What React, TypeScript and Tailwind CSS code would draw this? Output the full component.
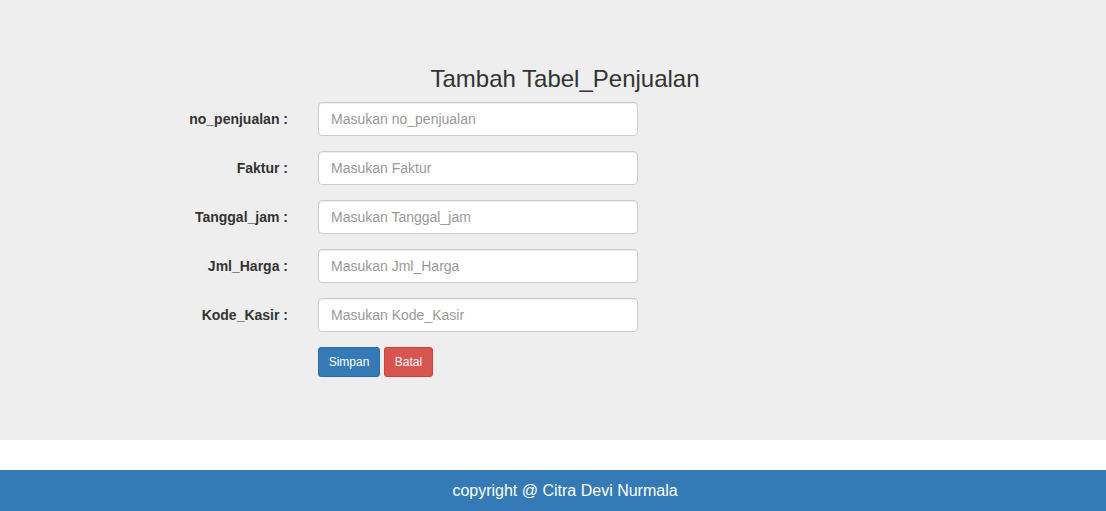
import React from "react";

const fields = [
  { label: "no_penjualan :", ph: "Masukan no_penjualan" },
  { label: "Faktur :", ph: "Masukan Faktur" },
  { label: "Tanggal_jam :", ph: "Masukan Tanggal_jam" },
  { label: "Jml_Harga :", ph: "Masukan Jml_Harga" },
  { label: "Kode_Kasir :", ph: "Masukan Kode_Kasir" },
];

export default function App() {
  return (
    <div className="w-[1106px] h-[511px] overflow-hidden bg-white text-[#333] font-['Liberation_Sans',Arial,sans-serif]">
      <div className="h-[440px] bg-[#eeeeee] pt-[66px]">
        <h3 className="pl-[24px] text-center text-[24px] leading-[26.4px] font-normal mb-[10px]">
          Tambah Tabel_Penjualan
        </h3>
        <form className="flex flex-col gap-[15px]" onSubmit={(e) => e.preventDefault()}>
          {fields.map((f) => (
            <div key={f.label} className="flex">
              <label className="w-[303px] pr-[15px] pt-[7px] text-right text-[14px] leading-[20px] font-bold">
                {f.label}
              </label>
              <div className="pl-[15px]">
                <input
                  type="text"
                  placeholder={f.ph}
                  className="block w-[320px] h-[34px] px-[12px] py-[6px] text-[14px] leading-[20px] text-[#555] bg-white border border-[#cccccc] rounded-[4px] shadow-[inset_0_1px_1px_rgba(0,0,0,0.075)] placeholder:text-[#999] outline-none"
                />
              </div>
            </div>
          ))}
          <div className="flex pl-[318px] gap-[4px]">
            <button
              type="submit"
              className="w-[62px] py-[5px] text-center text-[12px] leading-[18px] text-white bg-[#337ab7] border border-[#2e6da4] rounded-[3px]"
            >
              Simpan
            </button>
            <button
              type="button"
              className="w-[49px] py-[5px] text-center text-[12px] leading-[18px] text-white bg-[#d9534f] border border-[#d43f3a] rounded-[3px]"
            >
              Batal
            </button>
          </div>
        </form>
      </div>
      <div className="h-[30px] bg-white" />
      <footer className="h-[41px] bg-[#337ab7] flex items-center justify-center pl-[24px] text-white text-[16px] leading-[20px]">
        copyright @ Citra Devi Nurmala
      </footer>
    </div>
  );
}
